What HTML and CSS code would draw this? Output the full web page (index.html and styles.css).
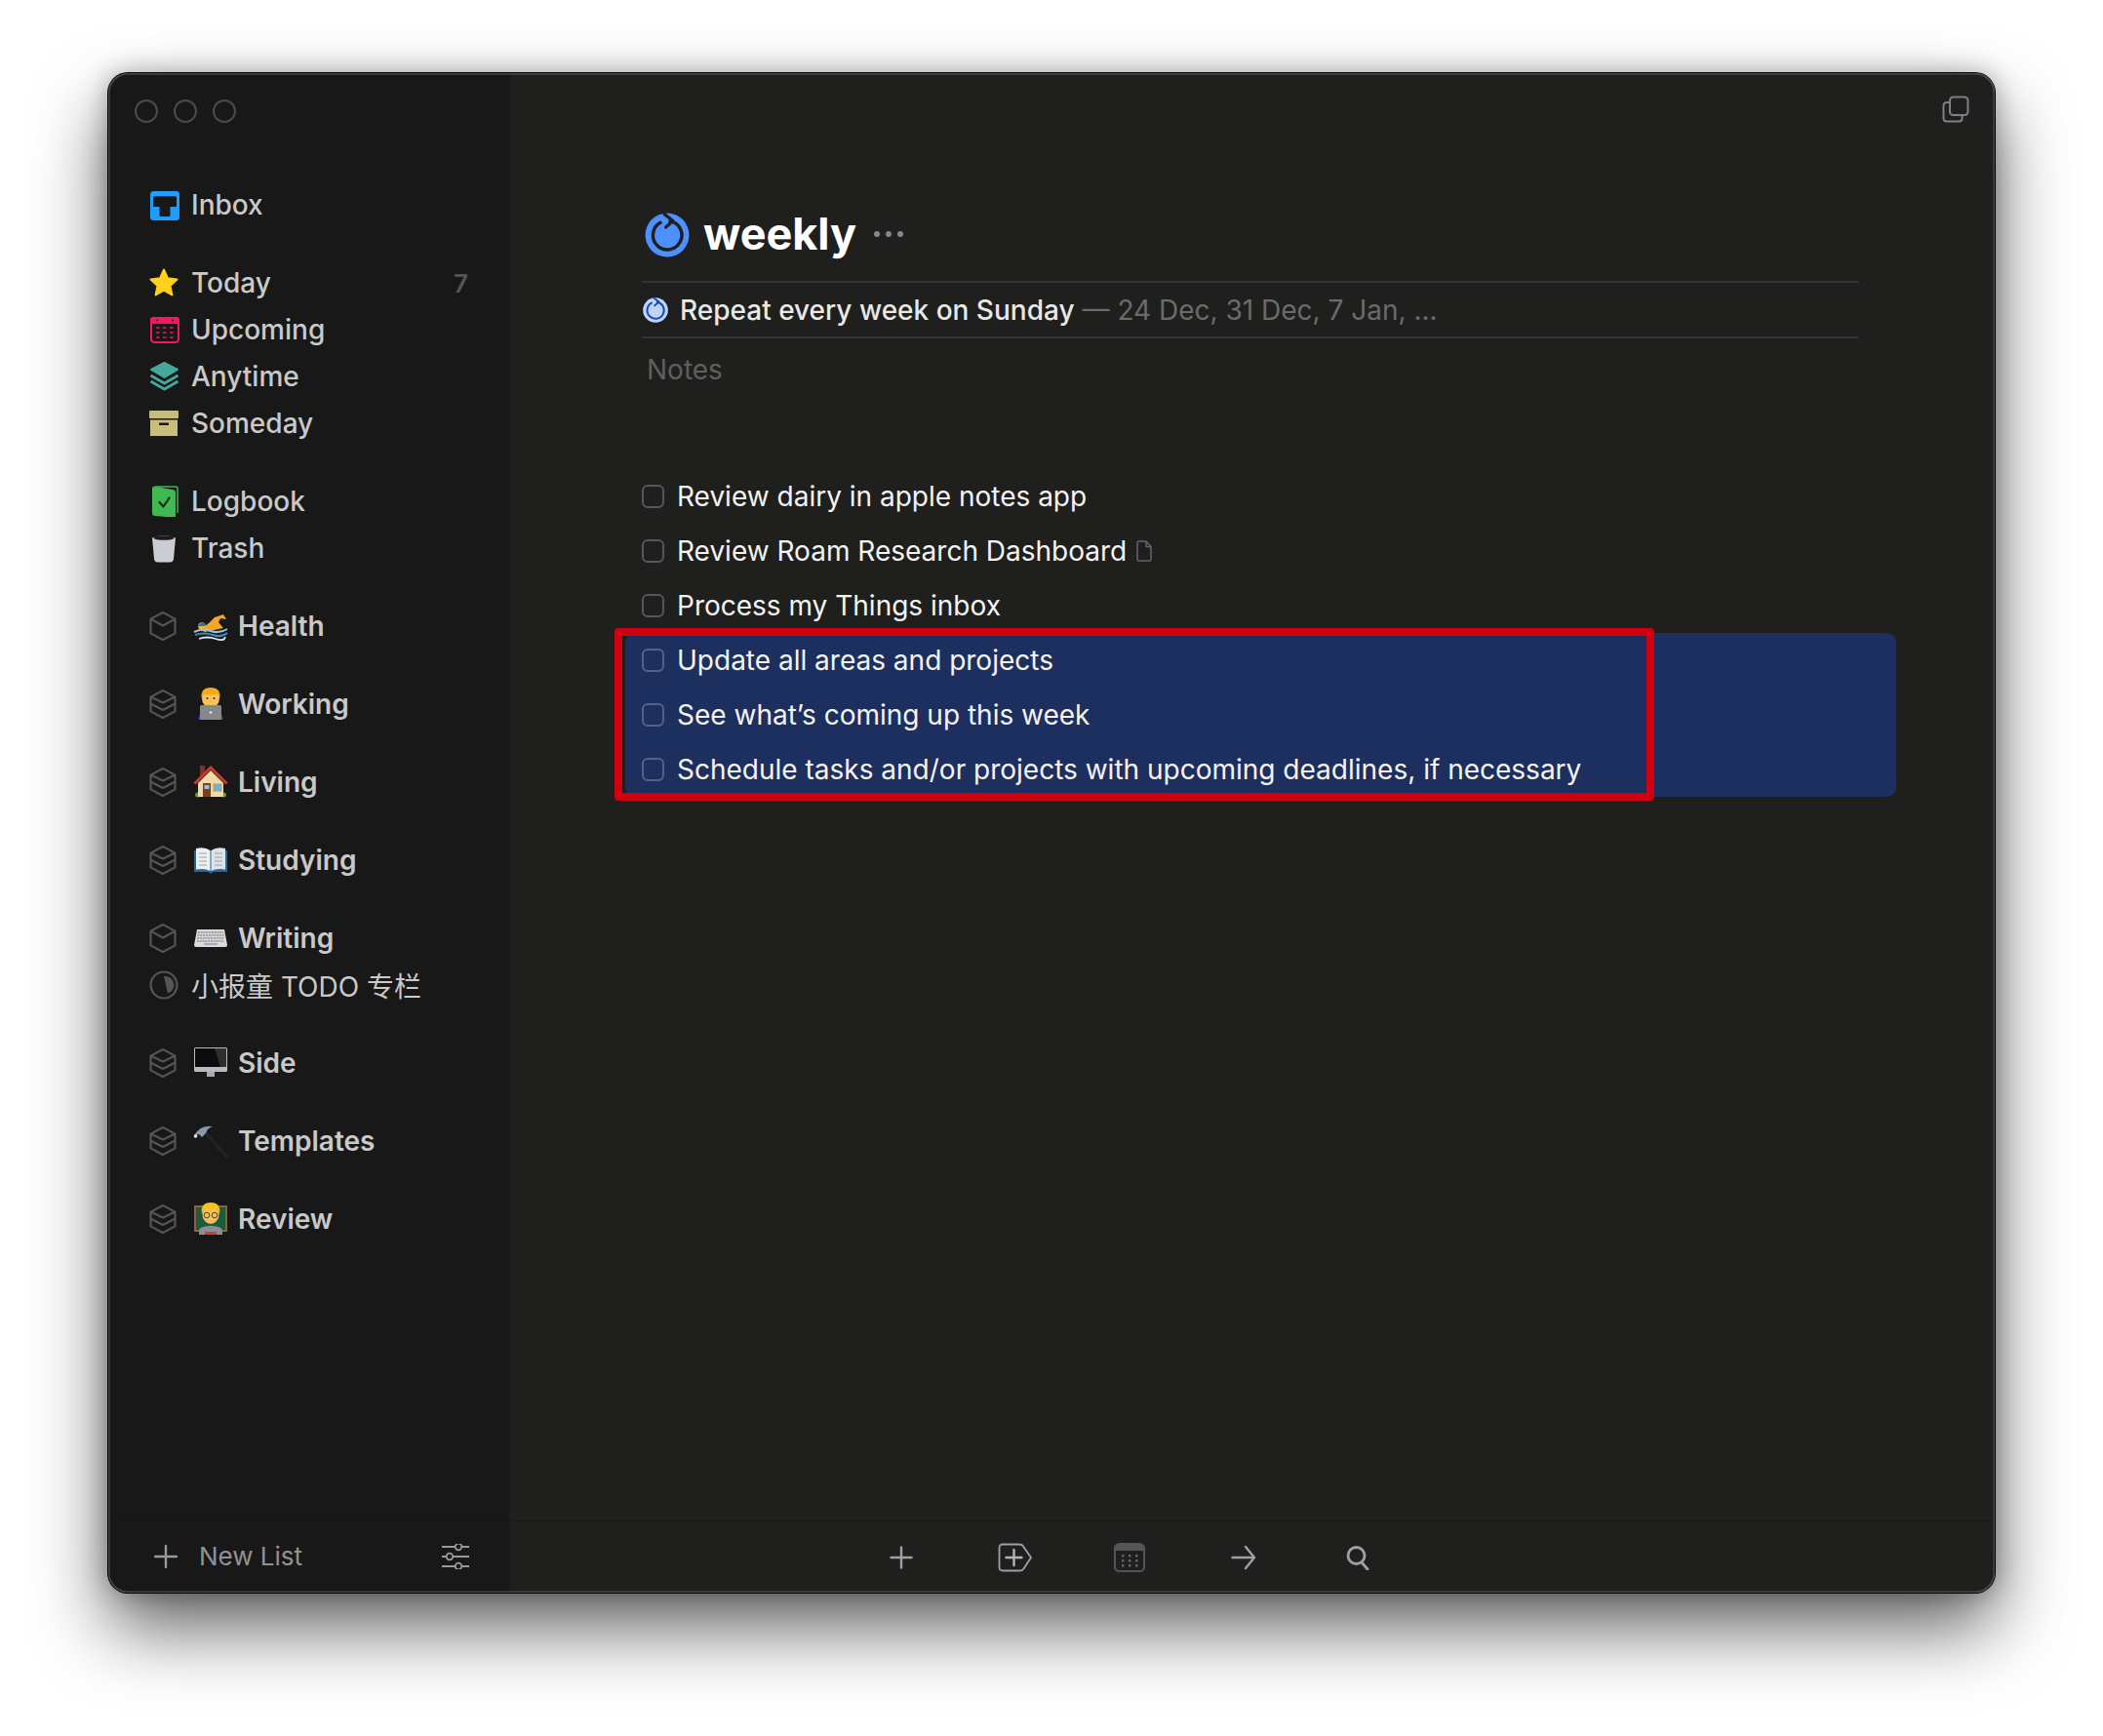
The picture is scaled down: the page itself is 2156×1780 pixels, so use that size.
FILE: index.html
```html
<!DOCTYPE html>
<html lang="en">
<head>
<meta charset="utf-8">
<title>weekly</title>
<link rel="stylesheet" href="styles.css">
</head>
<body>
<svg class="defs" width="0" height="0" aria-hidden="true">
  <symbol id="box1" viewBox="0 0 30 32"><path d="M15 2 27.5 8.6V23.4L15 30 2.500 23.400V8.600Z M2.500 8.600 15 15.500 27.500 8.600" fill="none" stroke="#555" stroke-width="2.200" stroke-linejoin="round"/></symbol>
  <symbol id="box2" viewBox="0 0 30 32"><path d="M15 2 27.5 8.600V23.400L15 30 2.500 23.400V8.600Z M2.500 8.600 15 14.500 27.500 8.600 M2.500 15.500 15 22 27.500 15.500" fill="none" stroke="#555" stroke-width="2.200" stroke-linejoin="round"/></symbol>
  <symbol id="repeat" viewBox="0 0 48 48"><path d="M27 9.700A14.800 14.800 0 1 1 17 11.300" fill="none" stroke="currentColor" stroke-width="3.400" stroke-linecap="round"/><path d="M21 2.500 30 9.500 22.500 16" fill="none" stroke="currentColor" stroke-width="3.200" stroke-linecap="round" stroke-linejoin="round"/></symbol>
</svg>
<div class="window">
  <aside class="sidebar">
    <div class="lights"><span class="light"></span><span class="light"></span><span class="light"></span></div>
    <nav class="nav">
      <div class="group">
        <div class="row">
          <svg class="ico" viewBox="0 0 32 32"><rect x="2" y="2" width="30" height="30" rx="3.500" fill="#1e9dff"/><path d="M6.500 7.300H27.500Q29 7.300 29 9V18H22.500V26.700Q22.500 28 21 28H13Q11.500 28 11.500 26.700V18H5V9Q5 7.300 6.500 7.300Z" fill="#181818"/></svg>
          <span class="label">Inbox</span>
        </div>
      </div>
      <div class="group">
        <div class="row">
          <svg class="ico" viewBox="0 0 32 32"><path d="M16 2.500 20 11.300 29.500 12.400 22.500 18.900 24.400 28.500 16 23.700 7.600 28.500 9.500 18.900 2.500 12.400 12 11.300Z" fill="#ffd11a" stroke="#ffd11a" stroke-width="2" stroke-linejoin="round"/></svg>
          <span class="label">Today</span><span class="count">7</span>
        </div>
        <div class="row">
          <svg class="ico" viewBox="0 0 32 32"><rect x="3" y="4" width="28" height="25" rx="3.500" fill="none" stroke="#f2195f" stroke-width="2"/><path d="M5 3H29Q32 3 32 6V10H2V6Q2 3 5 3Z" fill="#f2195f"/><circle cx="9" cy="6.500" r="1.100" fill="#4a0f22"/><circle cx="25" cy="6.500" r="1.100" fill="#4a0f22"/><path d="M8 14h3.500M15 14h3.500M22 14h3.500M8 19h3.500M15 19h3.500M22 19h3.500M8 24h3.500M15 24h3.500M22 24h3.500" stroke="#b5194f" stroke-width="2.200"/></svg>
          <span class="label">Upcoming</span>
        </div>
        <div class="row">
          <svg class="ico" viewBox="0 0 32 32"><path d="M16.500 2 30 8.800 16.500 17 3 8.800Z" fill="#45a99a" stroke="#45a99a" stroke-width="2" stroke-linejoin="round"/><path d="M2.500 15 16.500 23 30.500 15M2.500 21 16.500 29 30.500 21" fill="none" stroke="#45a99a" stroke-width="3" stroke-linejoin="round"/></svg>
          <span class="label">Anytime</span>
        </div>
        <div class="row">
          <svg class="ico" viewBox="0 0 32 32"><rect x="1" y="3" width="30" height="8" rx="1" fill="#c8bd7c"/><rect x="2" y="12.500" width="28" height="16.500" fill="#c8bd7c"/><rect x="11" y="15.500" width="10" height="2.500" fill="#181818"/></svg>
          <span class="label">Someday</span>
        </div>
      </div>
      <div class="group">
        <div class="row">
          <svg class="ico" viewBox="0 0 32 32"><path d="M7 1H28Q30 1 30 3V28" fill="none" stroke="#3fb950" stroke-width="1.500"/><path d="M4 3Q4 0 7 1L25 4Q28 4.500 28 7V31Q28 33 25 32.500L7 31Q4 31 4 28Z" fill="#3fb950"/><path d="M11.500 17 15.500 21.500 21.500 12.500" fill="none" stroke="#17301c" stroke-width="2.200" stroke-linecap="round" stroke-linejoin="round"/></svg>
          <span class="label">Logbook</span>
        </div>
        <div class="row">
          <svg class="ico" viewBox="0 0 32 32"><path d="M4 5.500Q16 1 28 5.500L26 27Q25.600 30.500 22 30.500H10Q6.400 30.500 6 27Z" fill="#c9cdd1"/><ellipse cx="16" cy="5.500" rx="10.500" ry="2.300" fill="#1b1b1b"/></svg>
          <span class="label">Trash</span>
        </div>
      </div>
      <div class="group">
        <div class="row">
          <svg class="box"><use href="#box1"/></svg>
          <svg class="emoji" viewBox="0 0 36 36"><path d="M7 22 16 15 22 9 31 6 34 11 28 10 26 14 31 20 12 24Z" fill="#f5a623"/><circle cx="9" cy="18" r="3.800" fill="#f7b733"/><path d="M5 17Q9 12.500 13 16L12 18H6Z" fill="#2a6fc9"/><path d="M1 24Q9 20 18 23T35 21" fill="none" stroke="#8fc4e8" stroke-width="2"/><path d="M2 27Q11 24 20 27T35 25" fill="none" stroke="#4d86b0" stroke-width="2.200"/><path d="M6 31Q14 28 23 31T33 29" fill="none" stroke="#d7e6f0" stroke-width="1.800"/></svg>
          <span class="label strong">Health</span>
        </div>
        <div class="row row-gap">
          <svg class="box"><use href="#box2"/></svg>
          <svg class="emoji" viewBox="0 0 36 36"><path d="M5 34 8 24H28L31 34Z" fill="#1f3fc4"/><ellipse cx="18" cy="12" rx="9" ry="10" fill="#f7c15c"/><path d="M8.500 12Q7.500 1 18 1T27.500 12L25 8Q18 9 11 8Z" fill="#f2a91f"/><circle cx="14.500" cy="12" r="1" fill="#4b2f15"/><circle cx="21.500" cy="12" r="1" fill="#4b2f15"/><rect x="7" y="19" width="22" height="15" rx="1.500" fill="#85888c"/><circle cx="18" cy="26.500" r="1.300" fill="#eee"/></svg>
          <span class="label strong">Working</span>
        </div>
        <div class="row row-gap">
          <svg class="box"><use href="#box2"/></svg>
          <svg class="emoji" viewBox="0 0 36 36"><rect x="7" y="1" width="5" height="10" fill="#8c2b24"/><circle cx="4.500" cy="31" r="2.500" fill="#5d9b3a"/><circle cx="31.500" cy="31" r="2.500" fill="#5d9b3a"/><path d="M18 6 5 19V33H31V19Z" fill="#f3d9a4"/><path d="M1.500 19.500 18 3 34.500 19.500" fill="none" stroke="#c73a2e" stroke-width="3"/><rect x="10" y="19" width="8" height="14" fill="#7a3f1f"/><rect x="11.500" y="21" width="5" height="4" fill="#8fc4e8"/><rect x="21" y="20" width="8" height="7" fill="#6db3e0" stroke="#b69a6a"/></svg>
          <span class="label strong">Living</span>
        </div>
        <div class="row row-gap">
          <svg class="box"><use href="#box2"/></svg>
          <svg class="emoji" viewBox="0 0 36 36"><path d="M1 8V30H14Q17 30 18 32 19 30 22 30H35V8Z" fill="#1f6aa5"/><path d="M3 6Q12 4 17.500 8V29Q12 26 3 27.500Z" fill="#eef0f2"/><path d="M33 6Q24 4 18.500 8V29Q24 26 33 27.500Z" fill="#dfe3e7"/><path d="M6 11h8M6 15h8M6 19h8M6 23h8M22 11h8M22 15h8M22 19h8M22 23h8" stroke="#9aa1a8" stroke-width="1.200"/></svg>
          <span class="label strong">Studying</span>
        </div>
        <div class="row row-gap">
          <svg class="box"><use href="#box1"/></svg>
          <svg class="emoji" viewBox="0 0 36 36"><path d="M4 9H32L35 25Q35 27 33 27H3Q1 27 1 25Z" fill="#d8dadc"/><path d="M5 12h26M4.500 15h27M4 18h28M4 21h28" stroke="#8e9195" stroke-width="1.300" stroke-dasharray="2 .8"/><path d="M11 24h14" stroke="#9a9da1" stroke-width="1.500"/></svg>
          <span class="label strong">Writing</span>
        </div>
        <div class="row">
          <svg class="ico" viewBox="0 0 32 32"><circle cx="16" cy="16" r="13.500" fill="none" stroke="#555" stroke-width="2.200"/><path d="M16 7A9 9 0 0 1 20 24.500Z" fill="#555"/></svg>
          <span class="label cjk">小报童 TODO 专栏</span>
        </div>
      </div>
      <div class="group">
        <div class="row">
          <svg class="box"><use href="#box2"/></svg>
          <svg class="emoji" viewBox="0 0 36 36"><rect x="1" y="2" width="34" height="25" rx="1.500" fill="#b8babd"/><rect x="2" y="3" width="32" height="19" fill="#0c0c0c"/><path d="M22 3H34V22H28Z" fill="#2e2e2e"/><rect x="14" y="27" width="8" height="5" fill="#a9abae"/></svg>
          <span class="label strong">Side</span>
        </div>
        <div class="row row-gap">
          <svg class="box"><use href="#box2"/></svg>
          <svg class="emoji" viewBox="0 0 36 36"><path d="M13 10 34 33" stroke="#26221f" stroke-width="3.400" stroke-linecap="round"/><path d="M1 12Q8 1 20 3 14 5 13 10L9 14 6 11Q3 11 2.500 14Z" fill="#8b98a8"/><circle cx="2.500" cy="13" r="1.800" fill="#dfe5ea"/></svg>
          <span class="label strong">Templates</span>
        </div>
        <div class="row row-gap">
          <svg class="box"><use href="#box2"/></svg>
          <svg class="emoji" viewBox="0 0 36 36"><rect x="2" y="5" width="32" height="25" fill="#1e5a3c" stroke="#8a6240" stroke-width="2"/><path d="M6 34V29Q8 25 18 25T30 29V34Z" fill="#8a8d91"/><rect x="12" y="31" width="12" height="3" fill="#d33a3a"/><ellipse cx="18" cy="13" rx="8.500" ry="10" fill="#f7c15c"/><path d="M9 13Q7 1 18 1T27 13L25 8H11Z" fill="#f2c21f"/><circle cx="14" cy="14" r="2.800" fill="none" stroke="#5a3d1e" stroke-width="1"/><circle cx="22" cy="14" r="2.800" fill="none" stroke="#5a3d1e" stroke-width="1"/></svg>
          <span class="label strong">Review</span>
        </div>
      </div>
    </nav>
    <footer class="side-foot">
      <svg class="foot-plus" viewBox="0 0 24 24"><path d="M12 1V23M1 12H23" stroke="#9a9a9a" stroke-width="2.400" stroke-linecap="round"/></svg>
      <span class="new-list">New List</span>
      <svg class="sliders" viewBox="0 0 30 26"><path d="M1 3H14M22 3H29M1 13H5M13 13H29M1 23H14M22 23H29" stroke="#9a9a9a" stroke-width="1.800"/><circle cx="18" cy="3" r="3.300" fill="none" stroke="#9a9a9a" stroke-width="1.800"/><circle cx="9" cy="13" r="3.300" fill="none" stroke="#9a9a9a" stroke-width="1.800"/><circle cx="18" cy="23" r="3.300" fill="none" stroke="#9a9a9a" stroke-width="1.800"/></svg>
    </footer>
  </aside>
  <main class="main">
    <svg class="copy" viewBox="0 0 28 28"><rect x="8" y="1.500" width="18.500" height="18.500" rx="3.500" fill="none" stroke="#808080" stroke-width="2"/><path d="M8 7H5Q1.500 7 1.500 10.500V23Q1.500 26.500 5 26.500H17.500Q20.500 26.500 20.500 23.500V20" fill="none" stroke="#808080" stroke-width="2"/></svg>
    <div class="content">
      <header class="title-row">
        <svg class="title-icon" viewBox="0 0 48 48"><circle cx="24" cy="25" r="22.500" fill="#4d90fe"/><use href="#repeat" y="1" width="48" height="48" class="ring-dark"/></svg>
        <h1 class="title">weekly</h1>
        <div class="dots"><span class="dot"></span><span class="dot"></span><span class="dot"></span></div>
      </header>
      <div class="repeat-row">
        <svg class="repeat-icon" viewBox="0 0 48 48"><circle cx="24" cy="24" r="22" fill="#bcd6fb"/><use href="#repeat" width="48" height="48" class="ring-blue"/></svg>
        <span class="repeat-text">Repeat every week on Sunday</span>
        <span class="repeat-dates">— 24 Dec, 31 Dec, 7 Jan, ...</span>
      </div>
      <div class="notes">Notes</div>
      <ul class="tasks">
        <li class="task"><span class="check"></span><span class="task-text">Review dairy in apple notes app</span></li>
        <li class="task"><span class="check"></span><span class="task-text">Review Roam Research Dashboard</span><svg class="note" viewBox="0 0 16 22"><path d="M2.500 1H10L15 6.500V19.500Q15 21 13.500 21H2.500Q1 21 1 19.500V2.500Q1 1 2.500 1ZM10 1V6.500H15" fill="none" stroke="#666" stroke-width="1.500" stroke-linejoin="round"/></svg></li>
        <li class="task"><span class="check"></span><span class="task-text">Process my Things inbox</span></li>
      </ul>
      <ul class="tasks selected">
        <li class="task"><span class="check"></span><span class="task-text">Update all areas and projects</span></li>
        <li class="task"><span class="check"></span><span class="task-text">See what’s coming up this week</span></li>
        <li class="task"><span class="check"></span><span class="task-text">Schedule tasks and/or projects with upcoming deadlines, if necessary</span></li>
        <li class="marker" aria-hidden="true"></li>
      </ul>
    </div>
    <footer class="toolbar">
      <div class="tool"><svg class="t-plus" viewBox="0 0 24 24"><path d="M12 1.500V22.500M1.500 12H22.500" stroke="#a0a0a0" stroke-width="2.400" stroke-linecap="round"/></svg></div>
      <div class="tool"><svg class="t-tag" viewBox="0 0 36 30"><path d="M5 1.500H22Q25 1.500 26 3.500L34 15 26.500 26.500Q25.500 28.500 22.500 28.500H5Q1.500 28.500 1.500 25V5Q1.500 1.500 5 1.500Z" fill="none" stroke="#a0a0a0" stroke-width="1.800"/><path d="M16.500 7V23M8.500 15H24.500" stroke="#b4b4b4" stroke-width="2.400" stroke-linecap="round"/></svg></div>
      <div class="tool"><svg class="t-cal" viewBox="0 0 32 30"><rect x="1" y="1" width="30" height="28" rx="4.500" fill="none" stroke="#555" stroke-width="2"/><path d="M5 1H27Q31 1 31 5V8H1V5Q1 1 5 1Z" fill="#555"/><g fill="#666"><rect x="8" y="12" width="2.400" height="2.400"/><rect x="15" y="12" width="2.400" height="2.400"/><rect x="22" y="12" width="2.400" height="2.400"/><rect x="8" y="17" width="2.400" height="2.400"/><rect x="15" y="17" width="2.400" height="2.400"/><rect x="22" y="17" width="2.400" height="2.400"/><rect x="8" y="22" width="2.400" height="2.400"/><rect x="15" y="22" width="2.400" height="2.400"/><rect x="22" y="22" width="2.400" height="2.400"/></g></svg></div>
      <div class="tool"><svg class="t-arrow" viewBox="0 0 26 26"><path d="M1.500 13H24M15 2 24 13 15 24" fill="none" stroke="#a0a0a0" stroke-width="2.400" stroke-linecap="round" stroke-linejoin="round"/></svg></div>
      <div class="tool"><svg class="t-search" viewBox="0 0 24 26"><circle cx="10.500" cy="11" r="8.500" fill="none" stroke="#a0a0a0" stroke-width="2.800"/><path d="M16 18 22 25" stroke="#a0a0a0" stroke-width="2.800" stroke-linecap="round"/></svg></div>
    </footer>
  </main>
</div>
</body>
</html>
```
FILE: styles.css
```css
* { box-sizing: border-box; }
html, body { margin: 0; padding: 0; }
body {
  width: 2156px;
  height: 1780px;
  padding: 75px 111px 147px;
  background: #fff;
  font-family: Inter, "Noto Sans CJK SC", sans-serif;
  overflow: hidden;
}
.defs { position: absolute; }
.window {
  position: relative;
  display: flex;
  width: 1934px;
  height: 1558px;
  border-radius: 20px;
  overflow: hidden;
  background: #1f1f1e;
}
.window-shadow { }
body::before {
  content: "";
  position: absolute;
  left: 111px;
  top: 75px;
  width: 1934px;
  height: 1558px;
  border-radius: 20px;
  box-shadow: 0 0 0 1px #000, 0 36px 76px rgba(0,0,0,.62), 0 0 26px rgba(0,0,0,.3);
}
.window::after {
  content: "";
  position: absolute;
  inset: 0;
  border-radius: 20px;
  box-shadow: inset 0 0 0 1.500px #484848;
  pointer-events: none;
}
.sidebar {
  flex: 0 0 412px;
  display: flex;
  flex-direction: column;
  background: #181818;
}
.lights {
  display: flex;
  gap: 16px;
  padding: 27px 0 0 27px;
}
.light {
  width: 24px;
  height: 24px;
  border-radius: 50%;
  border: 2px solid #4b4b4b;
}
.nav {
  flex: 1;
  display: flex;
  flex-direction: column;
  gap: 32px;
  padding: 60px 0 0 41px;
}
.group { display: flex; flex-direction: column; }
.row {
  display: flex;
  align-items: center;
  height: 48px;
  padding-right: 43px;
}
.row-gap { margin-top: 32px; }
.ico { flex: 0 0 32px; width: 32px; height: 32px; margin-right: 12px; }
.box { flex: 0 0 30px; width: 30px; height: 32px; margin-right: 16px; }
.emoji { flex: 0 0 36px; width: 36px; height: 36px; margin-right: 10px; }
.label {
  font-size: 28px;
  font-weight: 500;
  color: #c9c9c9;
  white-space: nowrap;
}
.strong { font-weight: 600; }
.cjk { font-weight: 400; }
.count {
  margin-left: auto;
  font-size: 26px;
  font-weight: 600;
  color: #555;
}
.side-foot {
  display: flex;
  align-items: center;
  height: 74px;
  padding: 0 41px 2px 47px;
  border-top: 1px solid #151515;
}
.foot-plus { width: 24px; height: 24px; margin-right: 22px; }
.new-list { font-size: 26px; color: #929292; }
.sliders { width: 30px; height: 26px; margin-left: auto; }
.main {
  position: relative;
  flex: 1;
  display: flex;
  flex-direction: column;
  min-width: 0;
}
.copy {
  position: absolute;
  top: 23px;
  right: 26px;
  width: 28px;
  height: 28px;
}
.content {
  flex: 1;
  padding: 136px 140px 0 135px;
}
.title-row {
  display: flex;
  align-items: center;
  height: 79px;
  padding-bottom: 19px;
  border-bottom: 2px solid #353535;
}
.title-icon { width: 48px; height: 48px; margin: 0 13px 0 2px; }
.ring-dark { color: #1f1f1e; }
.ring-blue { color: #1849b8; }
.title {
  margin: 0;
  font-size: 45px;
  font-weight: 700;
  color: #fff;
  line-height: 60px;
}
.dots { display: flex; gap: 6px; margin-left: 18px; }
.dot { width: 6px; height: 6px; border-radius: 50%; background: #868686; }
.repeat-row {
  display: flex;
  align-items: center;
  height: 57px;
  border-bottom: 2px solid #353535;
  white-space: nowrap;
}
.repeat-icon { width: 28px; height: 28px; margin-right: 11px; }
.repeat-text { font-size: 28px; font-weight: 500; color: #e8e8e8; }
.repeat-dates { margin-left: 8px; font-size: 28px; color: #6b6b6b; }
.notes {
  height: 134px;
  padding: 15px 0 0 5px;
  font-size: 28px;
  line-height: 34px;
  color: #5f5f5f;
}
.tasks {
  list-style: none;
  margin: 0;
  padding: 0;
}
.task {
  display: flex;
  align-items: center;
  height: 56px;
}
.check {
  flex: 0 0 23px;
  width: 23px;
  height: 24px;
  margin-right: 13px;
  border: 2px solid #565656;
  border-radius: 6px;
}
.task-text {
  font-size: 28px;
  color: #f4f4f4;
  white-space: nowrap;
}
.note { width: 16px; height: 22px; margin-left: 10px; }
.selected {
  position: relative;
  margin: 0 -39px 0 -17px;
  padding-left: 17px;
  background: #1d2f5f;
  border-radius: 10px;
}
.selected .check { border-color: #51628c; }
.marker {
  position: absolute;
  left: -11px;
  top: -5px;
  width: 1066px;
  height: 177px;
  border: 8px solid #d0000f;
  border-radius: 4px;
}
.toolbar {
  display: flex;
  align-items: center;
  height: 74px;
  padding: 0 0 0 342px;
  border-top: 1px solid #191919;
}
.tool {
  flex: 0 0 117px;
  display: flex;
  justify-content: center;
  align-items: center;
}
.t-plus { width: 24px; height: 24px; }
.t-tag { width: 36px; height: 30px; }
.t-cal { width: 32px; height: 30px; }
.t-arrow { width: 26px; height: 26px; }
.t-search { width: 24px; height: 26px; }
```
